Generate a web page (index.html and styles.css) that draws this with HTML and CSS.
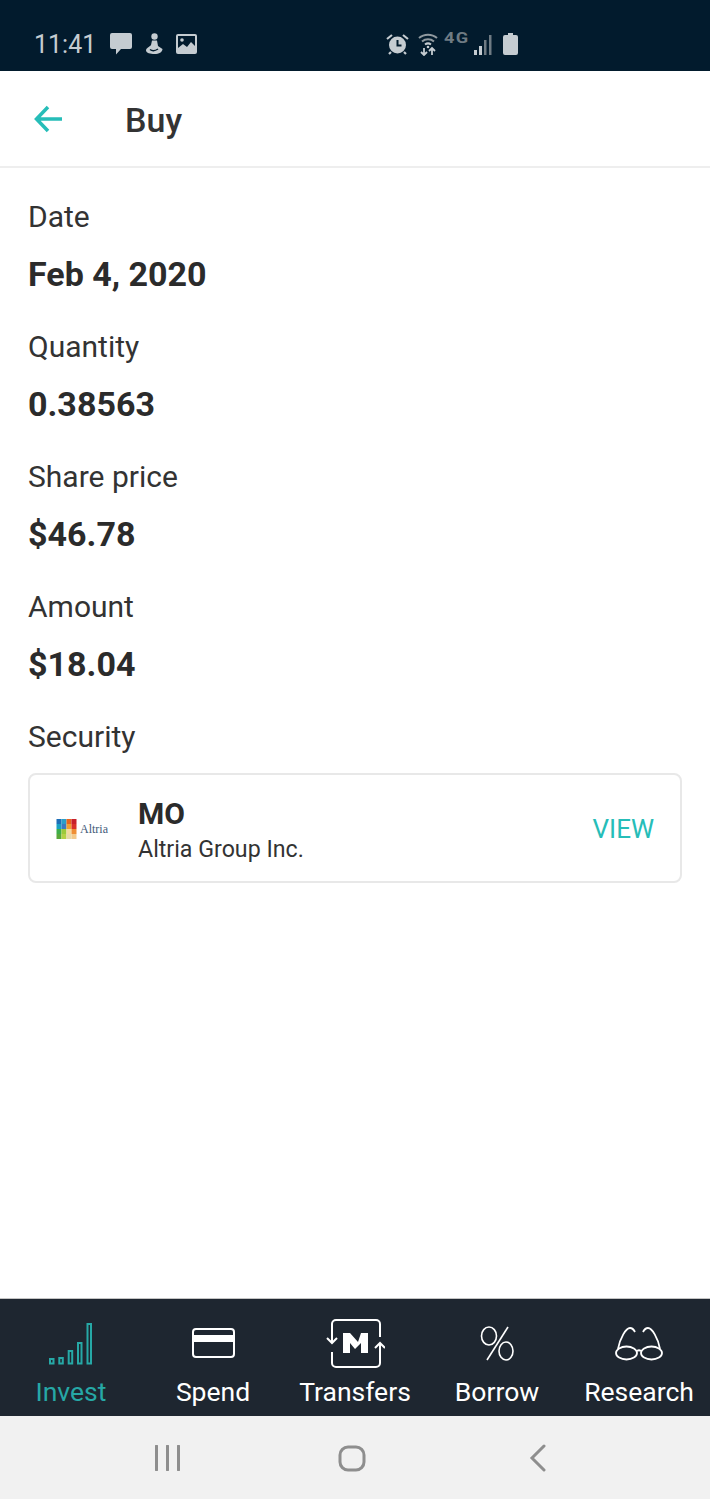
FILE: index.html
```html
<!DOCTYPE html>
<html lang="en">
<head>
    <meta charset="UTF-8">
    <meta name="viewport" content="width=device-width, initial-scale=1.0">
    <title>Buy</title>
    <link rel="stylesheet" href="styles.css">
</head>
<body>
    <div class="app">
        <div class="status-bar">
            <div class="status-left">
                <span class="clock">11:41</span>
                <svg width="24" height="22" viewBox="0 0 24 22"><path d="M3 0h18a2 2 0 0 1 2 2v12a2 2 0 0 1-2 2H12l-5 5.500V16H3a2 2 0 0 1-2-2V2a2 2 0 0 1 2-2z" fill="#c5ccd1"/></svg>
                <svg width="18" height="22" viewBox="0 0 18 22"><circle cx="9.500" cy="3.500" r="3.200" fill="#c5ccd1"/><path d="M7 7.500h5l1 5.500 4.500 3c0 3-3.500 5-8 5-4 0-8.500-1-8.500-3.500 0-2.500 3.500-3.500 5-5.500z" fill="#c5ccd1"/><path d="M5 16.500c2 1.500 5 1.500 8-.5" fill="none" stroke="#021b2d" stroke-width="1.500"/></svg>
                <svg class="picture" width="21" height="20" viewBox="0 0 21 20"><rect width="21" height="20" rx="2" fill="#c5ccd1"/><rect x="2" y="2" width="17" height="15" fill="#021b2d"/><path d="M2 18v-4l5-4 4 3 4-5 4 4v6z" fill="#c5ccd1"/><circle cx="6" cy="6" r="1.800" fill="#c5ccd1"/></svg>
            </div>
            <div class="status-right">
                <svg width="23" height="22" viewBox="0 0 23 22"><circle cx="11.500" cy="12" r="8.500" fill="#c5ccd1"/><path d="M11.500 7v5.500h4" fill="none" stroke="#021b2d" stroke-width="2"/><path d="M1 6l5-4M22 6l-5-4M5 19l-2 2M18 19l2 2" stroke="#c5ccd1" stroke-width="2.200"/></svg>
                <svg class="wifi" width="20" height="24" viewBox="0 0 20 24"><path d="M1 6c5-4.500 13-4.500 18 0M4 9.500c3.500-3 8.500-3 12 0" fill="none" stroke="#8f999f" stroke-width="2"/><path d="M7 12.500c2-1.500 4-1.500 6 0" fill="none" stroke="#c5ccd1" stroke-width="2"/><circle cx="10" cy="15" r="1.300" fill="#c5ccd1"/><path d="M6 16v7M3 20l3 3 3-3M14 23v-7M11 19l3-3 3 3" fill="none" stroke="#c5ccd1" stroke-width="1.800"/></svg>
                <span class="net">4G</span>
                <svg class="signal" width="18" height="20" viewBox="0 0 18 20"><rect x="0" y="15" width="3" height="5" fill="#c5ccd1"/><rect x="5" y="11" width="3" height="9" fill="#c5ccd1"/><rect x="10" y="5" width="2.500" height="15" fill="#6f7b83"/><rect x="15" y="0" width="2.500" height="20" fill="#6f7b83"/></svg>
                <svg class="battery" width="15" height="22" viewBox="0 0 15 22"><path d="M5 0h5v2h3a2 2 0 0 1 2 2v16a2 2 0 0 1-2 2H2a2 2 0 0 1-2-2V4a2 2 0 0 1 2-2h3z" fill="#c5ccd1"/></svg>
            </div>
        </div>

        <header class="top-bar">
            <svg class="back" width="30" height="30" viewBox="0 0 30 30"><path d="M29 15H4M15 3L3.500 15 15 27" fill="none" stroke="#26bdb8" stroke-width="3.500"/></svg>
            <h1>Buy</h1>
        </header>

        <main class="details">
            <div class="field">
                <div class="label">Date</div>
                <div class="value">Feb 4, 2020</div>
            </div>
            <div class="field">
                <div class="label">Quantity</div>
                <div class="value">0.38563</div>
            </div>
            <div class="field">
                <div class="label">Share price</div>
                <div class="value">$46.78</div>
            </div>
            <div class="field">
                <div class="label">Amount</div>
                <div class="value">$18.04</div>
            </div>
            <div class="label">Security</div>
            <div class="security-card">
                <div class="logo">
                    <svg width="21" height="20" viewBox="0 0 4 4">
                        <rect x="0" y="0" width="1" height="1" fill="#1d6fb8"/><rect x="1" y="0" width="1" height="1" fill="#2a9fc9"/><rect x="2" y="0" width="1" height="1" fill="#e8641f"/><rect x="3" y="0" width="1" height="1" fill="#c8202c"/>
                        <rect x="0" y="1" width="1" height="1" fill="#18a0c4"/><rect x="1" y="1" width="1" height="1" fill="#3b7bc0"/><rect x="2" y="1" width="1" height="1" fill="#f0a030"/><rect x="3" y="1" width="1" height="1" fill="#d9322b"/>
                        <rect x="0" y="2" width="1" height="1" fill="#3fae49"/><rect x="1" y="2" width="1" height="1" fill="#9cc93b"/><rect x="2" y="2" width="1" height="1" fill="#f3d9a0"/><rect x="3" y="2" width="1" height="1" fill="#ef8f35"/>
                        <rect x="0" y="3" width="1" height="1" fill="#5aa83a"/><rect x="1" y="3" width="1" height="1" fill="#b5d146"/><rect x="2" y="3" width="1" height="1" fill="#e7d9a8"/><rect x="3" y="3" width="1" height="1" fill="#f3c98a"/>
                    </svg>
                    <span class="logo-name">Altria</span>
                </div>
                <div class="security-info">
                    <div class="ticker">MO</div>
                    <div class="company">Altria Group Inc.</div>
                </div>
                <span class="view">VIEW</span>
            </div>
        </main>

        <nav class="tabs">
            <div class="tab active">
                <svg width="46" height="50" viewBox="0 0 46 50"><g fill="none" stroke="#26a8a6" stroke-width="2"><rect x="2" y="41" width="3.500" height="4.500"/><rect x="11.300" y="40" width="3.500" height="5.500"/><rect x="20.700" y="33" width="3.500" height="12.500"/><rect x="30" y="25" width="3.500" height="20.500"/><rect x="39.500" y="6" width="3.500" height="39.500"/></g></svg>
                <span>Invest</span>
            </div>
            <div class="tab">
                <svg width="46" height="50" viewBox="0 0 46 50"><rect x="3" y="11" width="41" height="28" rx="3" fill="none" stroke="#fff" stroke-width="2"/><rect x="3" y="17" width="41" height="7" fill="#fff"/></svg>
                <span>Spend</span>
            </div>
            <div class="tab">
                <svg width="60" height="50" viewBox="0 0 60 50"><path d="M55 19V6a4 4 0 0 0-4-4H11a4 4 0 0 0-4 4v19M7 34v11a4 4 0 0 0 4 4h40a4 4 0 0 0 4-4V25" fill="none" stroke="#fff" stroke-width="2"/><path d="M2 20l5 5 5-5M50 30l5-5 5 5" fill="none" stroke="#fff" stroke-width="2"/><path d="M18 35V15h7l8 9 3-9h7v20h-7V25l-6 6-5-6v10z" fill="#fff"/></svg>
                <span>Transfers</span>
            </div>
            <div class="tab">
                <svg width="46" height="50" viewBox="0 0 46 50"><ellipse cx="15" cy="18" rx="7.500" ry="9" fill="none" stroke="#fff" stroke-width="1.600"/><ellipse cx="32" cy="33" rx="7" ry="9" fill="none" stroke="#fff" stroke-width="1.600"/><path d="M34 9L13 42" stroke="#fff" stroke-width="1.600"/></svg>
                <span>Borrow</span>
            </div>
            <div class="tab">
                <svg width="50" height="50" viewBox="0 0 50 50"><g fill="none" stroke="#fff" stroke-width="1.800"><ellipse cx="12.500" cy="35" rx="10.500" ry="6.500"/><ellipse cx="37.500" cy="35" rx="10.500" ry="6.500"/><path d="M23 33q2-1.500 4 0M4 31C6 20 12 10 16 10q3 0 5 4M46 31C44 20 38 10 34 10q-3 0-5 4"/></g></svg>
                <span>Research</span>
            </div>
        </nav>

        <div class="system-nav">
            <svg width="28" height="26" viewBox="0 0 28 26"><path d="M2.500 1v24M13.500 1v24M24.500 1v24" stroke="#8e8e8e" stroke-width="3" stroke-linecap="round"/></svg>
            <svg class="home" width="28" height="28" viewBox="0 0 28 28"><rect x="2" y="3" width="24" height="23" rx="8" fill="none" stroke="#8e8e8e" stroke-width="3"/></svg>
            <svg width="18" height="28" viewBox="0 0 18 28"><path d="M15 2L3 14l12 12" fill="none" stroke="#8e8e8e" stroke-width="3" stroke-linecap="round"/></svg>
        </div>
    </div>
</body>
</html>
```

FILE: styles.css
```css
* {
    box-sizing: border-box;
}
body {
    margin: 0;
    font-family: Roboto, "Liberation Sans", sans-serif;
    background-color: #fff;
    color: #2b2b2b;
}
.app {
    width: 710px;
    height: 1499px;
    display: flex;
    flex-direction: column;
    overflow: hidden;
}
.status-bar {
    height: 71px;
    flex-shrink: 0;
    background-color: #021b2d;
    padding: 19px 0 0 34px;
    display: flex;
    align-items: flex-start;
    color: #c5ccd1;
}
.status-left {
    width: 352px;
    height: 50px;
    display: flex;
    align-items: center;
    gap: 12px;
}
.clock {
    font-size: 25px;
    margin-right: 1px;
}
.picture {
    margin-left: 1px;
}
.status-right {
    height: 50px;
    display: flex;
    align-items: center;
    gap: 9px;
}
.net {
    width: 26px;
    margin: -13px -5px 0 -3px;
    font-size: 14px;
    line-height: 14px;
    font-weight: 700;
    letter-spacing: 1px;
    color: #6f7b83;
    transform: scaleX(1.3);
    transform-origin: left;
}
.signal {
    margin-top: 2px;
}
.battery {
    margin-left: 2px;
}
.top-bar {
    height: 97px;
    flex-shrink: 0;
    display: flex;
    align-items: center;
    padding-left: 33px;
    border-bottom: 2px solid #eeeeee;
}
.top-bar h1 {
    margin: 2px 0 0 62px;
    font-size: 34px;
    font-weight: 500;
    color: #333;
}
.details {
    flex: 1;
    padding: 29px 28px 0;
}
.field {
    height: 130px;
}
.label {
    font-size: 30px;
    line-height: 40px;
    color: #333;
}
.value {
    font-size: 34px;
    line-height: 40px;
    font-weight: 700;
    margin-top: 17px;
}
.security-card {
    margin-top: 16px;
    height: 110px;
    border: 2px solid #e8e8e8;
    border-radius: 8px;
    padding: 0 26px;
    display: flex;
    align-items: center;
}
.logo {
    width: 82px;
    display: flex;
    align-items: center;
    gap: 3px;
    padding-top: 2px;
}
.logo-name {
    font-family: "Liberation Serif", serif;
    font-size: 12px;
    color: #3f5a78;
}
.security-info {
    flex: 1;
    padding-top: 6px;
}
.ticker {
    font-size: 30px;
    line-height: 36px;
    font-weight: 700;
}
.company {
    font-size: 23.2px;
    line-height: 34px;
    color: #333;
}
.view {
    font-size: 26px;
    padding-top: 2px;
    color: #26bdb8;
}
.tabs {
    height: 118px;
    flex-shrink: 0;
    background-color: #1e2630;
    border-top: 1px solid #c4c4c4;
    display: grid;
    grid-template-columns: repeat(5, 1fr);
    color: #fff;
}
.tab {
    display: flex;
    flex-direction: column;
    align-items: center;
    padding-top: 19px;
    font-size: 26.5px;
    line-height: 34px;
}
.tab svg {
    margin-bottom: 7px;
}
.tab span {
    white-space: nowrap;
}
.tab.active {
    color: #26a8a6;
}
.system-nav {
    height: 83px;
    flex-shrink: 0;
    background-color: #f1f1f1;
    display: flex;
    align-items: center;
    gap: 156px;
    padding-left: 154px;
}
.home {
    margin-right: 7px;
}
```
